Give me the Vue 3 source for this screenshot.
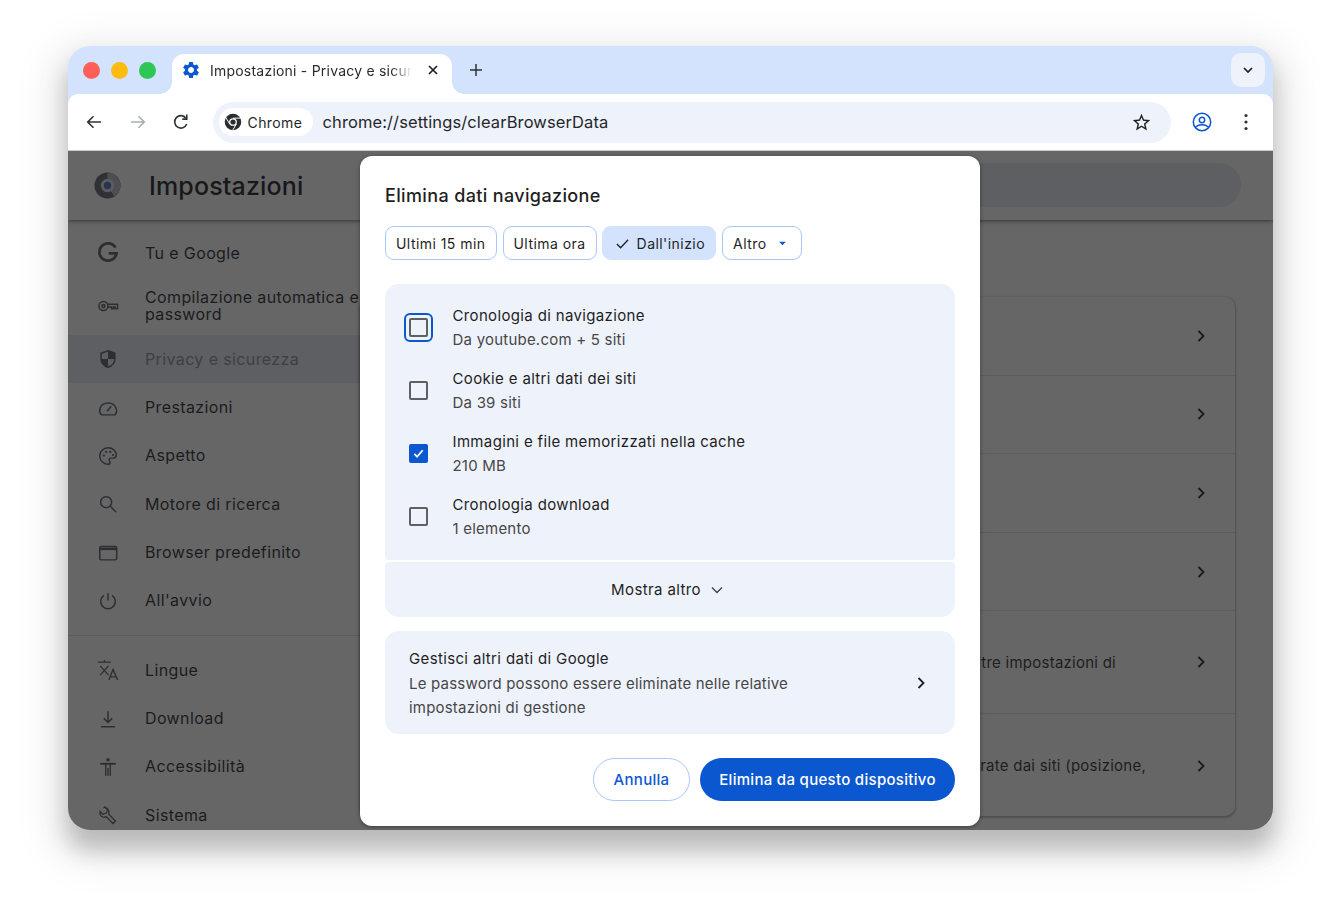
<script setup>
const navA = [
  { label: 'Tu e Google', icon: 'g' },
  { label: 'Compilazione automatica e password', icon: 'key', tall: true },
  { label: 'Privacy e sicurezza', icon: 'shield', active: true },
  { label: 'Prestazioni', icon: 'gauge' },
  { label: 'Aspetto', icon: 'palette' },
  { label: 'Motore di ricerca', icon: 'search' },
  { label: 'Browser predefinito', icon: 'browser' },
  { label: "All'avvio", icon: 'power' },
]
const navB = [
  { label: 'Lingue', icon: 'lang' },
  { label: 'Download', icon: 'download' },
  { label: 'Accessibilità', icon: 'access' },
  { label: 'Sistema', icon: 'wrench' },
]
const cardRows = [
  { text: '' }, { text: '' }, { text: '' }, { text: '' },
  { text: 'altre impostazioni di', tall: true, pad: 80 },
  { text: 'mostrate dai siti (posizione,', tall: true, pad: 50 },
]
const chips = [
  { label: 'Ultimi 15 min' },
  { label: 'Ultima ora' },
  { label: "Dall'inizio", on: true },
]
const rows = [
  { title: 'Cronologia di navigazione', sub: 'Da youtube.com + 5 siti', focus: true },
  { title: 'Cookie e altri dati dei siti', sub: 'Da 39 siti' },
  { title: 'Immagini e file memorizzati nella cache', sub: '210 MB', checked: true },
  { title: 'Cronologia download', sub: '1 elemento' },
]
</script>

<template>
  <div class="stage">
    <div class="window">
      <div class="strip">
        <div class="lights">
          <span class="light red"></span>
          <span class="light yellow"></span>
          <span class="light green"></span>
        </div>
        <div class="tab">
          <svg class="gear" viewBox="0 0 24 24"><path fill="#0b57d0" d="M19.14 12.94c.04-.3.06-.61.06-.94 0-.32-.02-.64-.07-.94l2.03-1.58a.49.49 0 0 0 .12-.61l-1.92-3.32a.488.488 0 0 0-.59-.22l-2.39.96c-.5-.38-1.03-.7-1.62-.94l-.36-2.54a.484.484 0 0 0-.48-.41h-3.84c-.24 0-.43.17-.47.41l-.36 2.54c-.59.24-1.13.57-1.62.94l-2.39-.96c-.22-.08-.47 0-.59.22L2.74 8.87c-.12.21-.08.47.12.61l2.03 1.58c-.05.3-.09.63-.09.94s.02.64.07.94l-2.03 1.58a.49.49 0 0 0-.12.61l1.92 3.32c.12.22.37.29.59.22l2.39-.96c.5.38 1.03.7 1.62.94l.36 2.54c.05.24.24.41.48.41h3.84c.24 0 .44-.17.47-.41l.36-2.54c.59-.24 1.13-.56 1.62-.94l2.39.96c.22.08.47 0 .59-.22l1.92-3.32c.12-.22.07-.47-.12-.61l-2.01-1.58zM12 15.6c-1.98 0-3.6-1.62-3.6-3.6s1.62-3.6 3.6-3.6 3.6 1.62 3.6 3.6-1.62 3.6-3.6 3.6z"/></svg>
          <span class="tab-title">Impostazioni - Privacy e sicur</span>
          <svg class="tab-x" viewBox="0 0 12 12"><path d="M2 2l8 8M10 2l-8 8" stroke="#1f1f1f" stroke-width="1.7" fill="none"/></svg>
        </div>
        <svg class="plus" viewBox="0 0 14 14"><path d="M7 1v12M1 7h12" stroke="#303336" stroke-width="1.5" fill="none"/></svg>
        <div class="expand">
          <svg viewBox="0 0 12 12"><path d="M2 4l4 4 4-4" stroke="#1f1f1f" stroke-width="1.7" fill="none"/></svg>
        </div>
      </div>

      <div class="toolbar">
        <svg class="tool" viewBox="0 0 20 20"><path d="M17 10H4M9.5 4.2L3.7 10l5.8 5.8" stroke="#303336" stroke-width="1.6" fill="none"/></svg>
        <svg class="tool" viewBox="0 0 20 20"><path d="M3 10h13M10.5 4.2l5.8 5.8-5.8 5.8" stroke="#a9adb3" stroke-width="1.6" fill="none"/></svg>
        <svg class="tool" viewBox="0 0 20 20"><path d="M15.7 12a6.2 6.2 0 1 1-.8-5.8" stroke="#303336" stroke-width="1.6" fill="none"/><path d="M15.8 2.6v4.5h-4.5" stroke="#303336" stroke-width="1.6" fill="none"/></svg>
        <div class="omni">
          <div class="site-chip">
            <svg class="chrome" viewBox="0 0 20 20">
              <circle cx="10" cy="10" r="9.2" fill="#2b2c2e"/>
              <circle cx="10" cy="10" r="4.3" fill="#fff"/>
              <circle cx="10" cy="10" r="2.9" fill="#2b2c2e"/>
              <path d="M10 5.7h8.500M6.300 12.200L2 5M13.700 12.200L9.500 19.500" stroke="#fff" stroke-width="1.100" fill="none"/>
            </svg>
            <span>Chrome</span>
          </div>
          <span class="url">chrome://settings/clearBrowserData</span>
          <svg class="star" viewBox="0 0 24 24"><path fill="#1f1f1f" d="M22 9.24l-7.19-.62L12 2 9.19 8.63 2 9.24l5.46 4.73L5.82 21 12 17.27 18.18 21l-1.63-7.03L22 9.24zM12 15.4l-3.76 2.27 1-4.28-3.32-2.88 4.38-.38L12 6.1l1.71 4.04 4.38.38-3.32 2.88 1 4.28L12 15.4z"/></svg>
        </div>
        <svg class="profile" viewBox="0 0 20 20">
          <circle cx="10" cy="10" r="8.7" stroke="#0b57d0" stroke-width="1.5" fill="none"/>
          <circle cx="10" cy="8" r="2.7" stroke="#0b57d0" stroke-width="1.5" fill="none"/>
          <path d="M3.6 15c1.8-1.6 4-2.3 6.4-2.3s4.6.7 6.4 2.3" stroke="#0b57d0" stroke-width="1.5" fill="none"/>
        </svg>
        <svg class="dots" viewBox="0 0 4 18"><circle cx="2" cy="2.5" r="1.6" fill="#303336"/><circle cx="2" cy="9" r="1.6" fill="#303336"/><circle cx="2" cy="15.5" r="1.6" fill="#303336"/></svg>
      </div>

      <div class="page">
        <header class="page-head">
          <svg class="logo" viewBox="0 0 28 28">
            <circle cx="14" cy="14" r="13.5" fill="#2f3134"/>
            <path d="M14 .5A13.500 13.500 0 0 1 21 25.500L14 14z" fill="#4c4e51"/>
            <circle cx="14" cy="14" r="7" fill="#5a5c60"/>
            <circle cx="14" cy="14" r="3.800" fill="#27334f"/>
          </svg>
          <h1>Impostazioni</h1>
          <div class="search"></div>
        </header>
        <div class="page-body">
          <nav class="side">
            <template v-for="(group, g) in [navA, navB]" :key="g">
              <div v-if="g === 1" class="side-rule"></div>
              <div v-for="item in group" :key="item.label" class="nav" :class="{ tall: item.tall, active: item.active }">
                <svg class="nav-ic" viewBox="0 0 24 24" fill="none" stroke="currentColor" stroke-width="1.6">
                  <template v-if="item.icon === 'g'">
                    <path d="M20.2 6.2A9.4 9.4 0 1 0 21.3 12.5H12.8" stroke-width="3"/>
                  </template>
                  <template v-else-if="item.icon === 'key'">
                    <circle cx="7" cy="12" r="4.9"/><circle cx="7" cy="12" r="1.6"/><path d="M11.900 10h10.500v5h-2.600v-2h-2v2h-2v-2h-3.900"/>
                  </template>
                  <template v-else-if="item.icon === 'shield'">
                    <path d="M12 3l7.500 2.800v5.600c0 4.700-3.100 8.200-7.500 9.600-4.400-1.400-7.500-4.900-7.500-9.600V5.800z"/>
                    <path d="M12 3l7.500 2.800V12H12zM12 12H4.500c.2 4.500 3.200 7.800 7.500 9z" fill="currentColor" stroke="none"/>
                  </template>
                  <template v-else-if="item.icon === 'gauge'">
                    <path d="M5 19.500h14.500c2-2 2.200-4.600 1.500-6.800-1.200-3.500-4.600-6.100-8.800-6.100S4.300 9.200 3.200 12.700c-.7 2.300-.2 4.800 1.800 6.800z"/><path d="M11 15.500l4.500-5.500"/>
                  </template>
                  <template v-else-if="item.icon === 'palette'">
                    <path d="M12 3C7 3 3 7 3 12s4 9 9 9c1.500 0 2.200-1 2.200-2 0-1.400-1-1.700-1-3 0-1 .8-1.700 1.800-1.700H18c1.900 0 3-1.300 3-3.300C21 6.500 17 3 12 3z"/>
                    <circle cx="7.500" cy="11.500" r="1.200" fill="currentColor" stroke="none"/><circle cx="10" cy="7.500" r="1.200" fill="currentColor" stroke="none"/><circle cx="14.500" cy="7.500" r="1.200" fill="currentColor" stroke="none"/><circle cx="17.500" cy="11" r="1.200" fill="currentColor" stroke="none"/>
                  </template>
                  <template v-else-if="item.icon === 'search'">
                    <circle cx="10" cy="10" r="6"/><path d="M14.500 14.500l6.500 6.500"/>
                  </template>
                  <template v-else-if="item.icon === 'browser'">
                    <rect x="3" y="5" width="18.500" height="14.500" rx="1.500"/><path d="M3 7.500h18.500" stroke-width="2.600"/>
                  </template>
                  <template v-else-if="item.icon === 'power'">
                    <path d="M12 3.500v8"/><path d="M7.500 5.800a8 8 0 1 0 9 0"/>
                  </template>
                  <template v-else-if="item.icon === 'lang'">
                    <path d="M1 3.500h14M8 1v2.500M3.500 7.500l9 10M12.500 7.500l-9 10" stroke-width="1.300"/><path d="M13 23l4.500-11.500L22.500 23M14.500 19.500h6" stroke-width="1.500"/>
                  </template>
                  <template v-else-if="item.icon === 'download'">
                    <path d="M12 3.500v12M7.500 11.300l4.500 4.500 4.500-4.500M4.500 20.500h15"/>
                  </template>
                  <template v-else-if="item.icon === 'access'">
                    <circle cx="12" cy="4" r="1.900" fill="currentColor" stroke="none"/><path d="M3.500 8.500h17" stroke-width="2"/><path d="M9.500 8.500v13M14.500 8.500v13M12 13v8.500" stroke-width="1.500"/>
                  </template>
                  <template v-else>
                    <path d="M8.500 3.200l3.300 3.300-1.800 3.400-3.600 1.300-3-3c-.7 2.800.4 5 3 6 1.400.4 2.500.2 3.500-.4l7.500 7.500 2.800-2.800-7.500-7.500c.6-1.500.7-3-.2-4.500-1-2-2.800-2.900-4.500-2.800z" stroke-width="1.400"/>
                  </template>
                </svg>
                <span class="nav-label">{{ item.label }}</span>
              </div>
            </template>
          </nav>
          <main class="main">
            <section class="card">
              <div v-for="(row, i) in cardRows" :key="i" class="card-row" :class="{ 'card-tall': row.tall }">
                <span v-if="row.text" class="card-text" :style="{ paddingRight: row.pad + 'px' }">{{ row.text }}</span>
                <svg class="chev" viewBox="0 0 10 14"><path d="M2.500 2l5 5-5 5" stroke="#1a1b1d" stroke-width="1.800" fill="none"/></svg>
              </div>
            </section>
          </main>
        </div>

        <div class="modal">
          <h2>Elimina dati navigazione</h2>
          <div class="chips">
            <button v-for="c in chips" :key="c.label" class="chip" :class="{ on: c.on }">
              <svg v-if="c.on" class="chip-check" viewBox="0 0 16 16"><path d="M2 8.500l4 4 8-8.500" stroke="#1f1f1f" stroke-width="1.400" fill="none"/></svg>
              {{ c.label }}
            </button>
            <button class="chip chip-more">
              Altro
              <svg class="caret" viewBox="0 0 10 6"><path d="M1 1h8L5 5z" fill="#0b57d0"/></svg>
            </button>
          </div>

          <div class="panel panel-top">
            <div v-for="r in rows" :key="r.title" class="row">
              <span class="box-wrap" :class="{ focus: r.focus }">
                <span class="box" :class="{ checked: r.checked }">
                  <svg v-if="r.checked" viewBox="0 0 14 14"><path d="M2.500 7.500l3 3 6-7" stroke="#fff" stroke-width="2" fill="none"/></svg>
                </span>
              </span>
              <div class="row-text">
                <div class="row-title">{{ r.title }}</div>
                <div class="row-sub">{{ r.sub }}</div>
              </div>
            </div>
          </div>
          <div class="panel panel-more">
            <span>Mostra altro</span>
            <svg class="more-chev" viewBox="0 0 12 8"><path d="M1 1.500l5 5 5-5" stroke="#444" stroke-width="1.400" fill="none"/></svg>
          </div>

          <div class="panel panel-google">
            <div class="google-text">
              <div class="row-title">Gestisci altri dati di Google</div>
              <div class="google-sub">Le password possono essere eliminate nelle relative impostazioni di gestione</div>
            </div>
            <svg class="chev" viewBox="0 0 10 14"><path d="M2.500 2l5 5-5 5" stroke="#1f1f1f" stroke-width="1.800" fill="none"/></svg>
          </div>

          <div class="actions">
            <button class="btn ghost">Annulla</button>
            <button class="btn solid">Elimina da questo dispositivo</button>
          </div>
        </div>
      </div>
    </div>
  </div>
</template>

<style>
html, body { background: #fff; }
</style>

<style scoped>
.stage {
  width: 1340px;
  height: 920px;
  padding: 46px 0 0 68px;
  box-sizing: border-box;
  overflow: hidden;
  background: #fff;
  font-family: Inter, "Liberation Sans", sans-serif;
  color: #1f1f1f;
}
.window {
  width: 1205px;
  height: 784px;
  border-radius: 22px;
  overflow: hidden;
  display: flex;
  flex-direction: column;
  background: #d3e3fd;
  isolation: isolate;
  box-shadow: 0 20px 22px rgba(0,0,0,.17), 0 14px 28px 6px rgba(0,0,0,.08), 0 14px 36px 24px rgba(0,0,0,.05);
}
.strip {
  height: 48px;
  flex: none;
  display: flex;
  align-items: flex-end;
  padding-left: 15px;
}
.lights {
  display: flex;
  gap: 11px;
  align-self: flex-start;
  margin-top: 16px;
  width: 89px;
}
.light { width: 17px; height: 17px; border-radius: 50%; }
.red { background: #ff5f57; }
.yellow { background: #febc12; }
.green { background: #2ec655; }
.tab {
  position: relative;
  width: 280px;
  height: 40px;
  background: #fff;
  border-radius: 12px 12px 0 0;
  display: flex;
  align-items: center;
  padding: 0 13px 8px 9px;
  box-sizing: border-box;
  font-size: 14px;
  letter-spacing: .22px;
  color: #2a2b2d;
}
.tab::before, .tab::after {
  content: "";
  position: absolute;
  bottom: 0;
  width: 12px;
  height: 12px;
}
.tab::before { left: -12px; background: radial-gradient(circle at 0 0, transparent 11.5px, #fff 12px); }
.tab::after { right: -12px; background: radial-gradient(circle at 100% 0, transparent 11.5px, #fff 12px); }
.gear { width: 20px; height: 20px; flex: none; }
.tab-title {
  margin-left: 9px;
  width: 202px;
  flex: none;
  white-space: nowrap;
  overflow: hidden;
  -webkit-mask-image: linear-gradient(90deg, #000 90%, transparent 100%);
  mask-image: linear-gradient(90deg, #000 90%, transparent 100%);
}
.tab-x { width: 12px; height: 12px; margin-left: 15px; flex: none; }
.plus { width: 14px; height: 14px; margin: 0 0 17px 17px; flex: none; }
.expand {
  margin-left: auto;
  margin-right: 8px;
  align-self: flex-start;
  margin-top: 7px;
  width: 34px;
  height: 34px;
  border-radius: 10px;
  background: #edf2fb;
  display: flex;
  align-items: center;
  justify-content: center;
}
.expand svg { width: 12px; height: 12px; }
.toolbar {
  height: 57px;
  flex: none;
  background: #fff;
  border-radius: 10px 10px 0 0;
  border-bottom: 1px solid #c9cacc;
  box-sizing: border-box;
  display: flex;
  align-items: center;
  padding-left: 16px;
}
.tool { width: 20px; height: 20px; margin-right: 23.5px; flex: none; }
.omni {
  margin-left: -2px;
  width: 958px;
  height: 41px;
  flex: none;
  border-radius: 21px;
  background: #edf2fb;
  display: flex;
  align-items: center;
  padding: 0 19px 0 6px;
  box-sizing: border-box;
}
.site-chip {
  width: 94px;
  height: 28px;
  border-radius: 14px;
  background: #fff;
  display: flex;
  align-items: center;
  gap: 6px;
  padding-left: 5px;
  box-sizing: border-box;
  font-size: 14px;
  letter-spacing: .4px;
  color: #26272a;
  flex: none;
}
.chrome { width: 18px; height: 18px; flex: none; }
.url { margin-left: 10px; font-size: 16.5px; color: #26272a; letter-spacing: .1px; }
.star { width: 21px; height: 21px; margin-left: auto; flex: none; }
.profile { width: 20px; height: 20px; margin-left: 21px; flex: none; }
.dots { width: 4px; height: 18px; margin-left: 32px; flex: none; }

.page {
  position: relative;
  flex: 1;
  min-height: 0;
  background: #666667;
  overflow: hidden;
}
.page-head {
  height: 69px;
  display: flex;
  align-items: center;
  padding: 0 32px 0 26px;
  box-sizing: border-box;
  box-shadow: 0 1px 4px rgba(0,0,0,.5);
  position: relative;
}
.logo { width: 27px; height: 27px; flex: none; }
h1 { margin: 0 0 0 28px; font-size: 25px; font-weight: 500; color: #17181a; letter-spacing: .15px; }
.search {
  margin-left: auto;
  width: 800px;
  height: 44px;
  border-radius: 22px;
  background: #5e5f62;
  margin-top: -1px;
}
.page-body { display: flex; }
.side { width: 292px; flex: none; padding-top: 9px; }
.nav {
  height: 48.35px;
  display: flex;
  align-items: center;
  padding-left: 29px;
  font-size: 16px;
  line-height: 17px;
  letter-spacing: .38px;
  color: #1b1c1e;
  white-space: nowrap;
}
.nav.tall { height: 58px; white-space: normal; }
.nav.tall .nav-label { width: 222px; }
.nav.active { height: 48px; background: #5d5f63; color: #3c3f44; }
.nav-ic { width: 22px; height: 22px; flex: none; margin-right: 26px; color: #2c2e31; }
.side-rule { height: 1px; background: #5c5d5f; margin: 10px 0; }
.main { flex: 1; min-width: 0; padding: 77px 38px 0 0; }
.card {
  height: 519px;
  border-radius: 10px;
  background: #666667;
  box-shadow: 0 1px 2px 1px rgba(0,0,0,.22);
}
.card-row {
  height: 78.6px;
  display: flex;
  align-items: center;
  justify-content: flex-end;
  padding-right: 29px;
  border-bottom: 1px solid #5c5d5f;
  box-sizing: border-box;
  font-size: 15px;
  letter-spacing: .25px;
  color: #1d1e20;
  white-space: nowrap;
  overflow: hidden;
}
.card-row.card-tall { height: 103px; }
.card-row:last-child { border-bottom: 0; }
.chev { width: 10px; height: 14px; flex: none; }
.modal {
  position: absolute;
  left: 292px;
  top: 5px;
  width: 619.5px;
  height: 670px;
  background: #fff;
  border-radius: 12px;
  padding: 27px 25px 0;
  box-sizing: border-box;
  box-shadow: 0 1px 4px rgba(0,0,0,.4);
  display: flex;
  flex-direction: column;
}
h2 { margin: 0; font-size: 18px; line-height: 26px; font-weight: 450; color: #1f1f1f; letter-spacing: .36px; }
.chips { display: flex; gap: 6px; margin-top: 17px; }
button { font-family: inherit; }
.chip {
  height: 34px;
  padding: 0 10px;
  border: 1px solid #a8c7fa;
  border-radius: 9px;
  background: #fff;
  font-size: 14px;
  color: #1f1f1f;
  display: flex;
  align-items: center;
  letter-spacing: .45px;
}
.chip.on { background: #d3e3fd; border-color: #d3e3fd; padding: 0 10px 0 12px; margin-left: -1px; }
.chip-check { width: 15px; height: 15px; margin-right: 7px; }
.chip-more { width: 80px; justify-content: flex-start; }
.caret { width: 9px; height: 5px; margin-left: 11px; }
.panel { width: 570px; background: #eef2fb; box-sizing: border-box; }
.panel-top {
  margin-top: 24px;
  height: 276px;
  border-radius: 14px 14px 4px 4px;
  padding: 20px 24px 0;
  display: flex;
  flex-direction: column;
  gap: 15px;
}
.row { display: flex; align-items: center; height: 48px; }
.box-wrap {
  width: 20px;
  height: 20px;
  margin: 0 24px 2px -.5px;
  flex: none;
  display: flex;
  align-items: center;
  justify-content: center;
  position: relative;
}
.box-wrap.focus::after {
  content: "";
  position: absolute;
  inset: -4.5px;
  border: 2px solid #0b57d0;
  border-radius: 6px;
}
.box {
  width: 15px;
  height: 15px;
  border: 2px solid #5f6062;
  border-radius: 2px;
  display: flex;
  align-items: center;
  justify-content: center;
}
.box.checked { background: #0b57d0; border-color: #0b57d0; }
.box svg { width: 13px; height: 13px; }
.row-title { font-size: 15px; line-height: 24px; color: #1f1f1f; letter-spacing: .35px; }
.row-sub { font-size: 15px; line-height: 24px; color: #474747; letter-spacing: .22px; }
.panel-more {
  margin-top: 2px;
  height: 55px;
  border-radius: 4px 4px 14px 14px;
  display: flex;
  align-items: center;
  justify-content: center;
  padding-right: 6px;
  font-size: 15px;
  letter-spacing: .38px;
}
.more-chev { width: 12px; height: 8px; margin-left: 10px; }
.panel-google {
  margin-top: 14px;
  height: 103px;
  border-radius: 14px;
  display: flex;
  align-items: center;
  padding: 0 29px 0 24px;
}
.google-text { width: 400px; padding-top: 2px; }
.google-text .row-title { margin-bottom: 1px; }
.google-sub { font-size: 15px; line-height: 24px; color: #474747; letter-spacing: .2px; }
.panel-google .chev { margin-left: auto; }
.actions { display: flex; justify-content: flex-end; gap: 10px; margin-top: 24px; width: 570px; }
.btn {
  height: 43px;
  border-radius: 22px;
  font-size: 15px;
  font-weight: 500;
  letter-spacing: .3px;
}
.ghost { width: 97px; background: #fff; border: 1px solid #a8c7fa; color: #0b57d0; }
.solid { width: 255px; background: #0b57d0; border: 0; color: #fff; }
</style>
